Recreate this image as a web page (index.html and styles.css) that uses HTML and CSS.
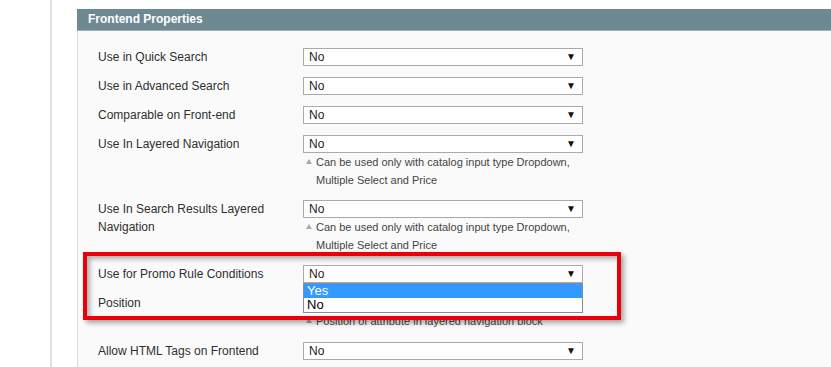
FILE: index.html
```html
<!DOCTYPE html>
<html lang="en">
<head>
  <meta charset="UTF-8" />
  <title>Frontend Properties</title>
  <link rel="stylesheet" href="styles.css">
</head>
<body>
  <div class="page">
    <div class="rail"></div>
    <div class="content">
      <div class="panel">
        <div class="panel-head">Frontend Properties</div>
        <div class="panel-body">

          <div class="row">
            <div class="label">Use in Quick Search</div>
            <div class="value">
              <div class="select">No<span class="arrow">&#9660;</span></div>
            </div>
          </div>

          <div class="row">
            <div class="label">Use in Advanced Search</div>
            <div class="value">
              <div class="select">No<span class="arrow">&#9660;</span></div>
            </div>
          </div>

          <div class="row">
            <div class="label">Comparable on Front-end</div>
            <div class="value">
              <div class="select">No<span class="arrow">&#9660;</span></div>
            </div>
          </div>

          <div class="row">
            <div class="label">Use In Layered Navigation</div>
            <div class="value">
              <div class="select">No<span class="arrow">&#9660;</span></div>
              <p class="note">Can be used only with catalog input type Dropdown, Multiple Select and Price</p>
            </div>
          </div>

          <div class="row">
            <div class="label">Use In Search Results Layered Navigation</div>
            <div class="value">
              <div class="select">No<span class="arrow">&#9660;</span></div>
              <p class="note">Can be used only with catalog input type Dropdown, Multiple Select and Price</p>
            </div>
          </div>

          <div class="row">
            <div class="label">Use for Promo Rule Conditions</div>
            <div class="value">
              <div class="select">No<span class="arrow">&#9660;</span></div>
              <ul class="options">
                <li class="option selected">Yes</li>
                <li class="option">No</li>
              </ul>
            </div>
          </div>

          <div class="row row-last">
            <div class="label">Position</div>
            <div class="value">
              <div class="select"></div>
              <p class="note">Position of attribute in layered navigation block</p>
            </div>
          </div>

          <div class="row">
            <div class="label">Allow HTML Tags on Frontend</div>
            <div class="value">
              <div class="select">No<span class="arrow">&#9660;</span></div>
            </div>
          </div>

          <div class="highlight"></div>
        </div>
      </div>
    </div>
  </div>
</body>
</html>
```

FILE: styles.css
```css
html, body {
  margin: 0;
  padding: 0;
  background: #fff;
  font-family: "Liberation Sans", Arial, sans-serif;
  color: #2f2f2f;
  overflow: hidden;
}

.page {
  display: flex;
  height: 100vh;
}

.rail {
  width: 50px;
  flex: none;
  border-right: 2px solid #e2e2e2;
}

.content {
  flex: 1;
  padding: 9px 0 0 25px;
}

.panel {
  height: 100%;
  display: flex;
  flex-direction: column;
}

.panel-head {
  height: 22px;
  line-height: 21px;
  box-sizing: border-box;
  padding-left: 11px;
  background: #6f8992;
  border-bottom: 1px solid #9fb2ba;
  color: #fff;
  font-weight: bold;
  font-size: 12px;
}

.panel-body {
  position: relative;
  flex: 1;
  background: #fafafa;
  border-left: 1px solid #d9d9d9;
  padding: 17px 0 0 20px;
}

.row {
  display: flex;
  padding-bottom: 11px;
}

.row-last {
  padding-bottom: 12px;
}

.label {
  width: 205px;
  flex: none;
  font-size: 12px;
  line-height: 18px;
  padding-right: 24px;
  box-sizing: border-box;
}

.value {
  position: relative;
  width: 280px;
  flex: none;
}

.select {
  position: relative;
  height: 18px;
  box-sizing: border-box;
  border: 1px solid #aaaaaa;
  background: #fff;
  padding-left: 5px;
  font-size: 12px;
  line-height: 16px;
  color: #222;
}

.arrow {
  position: absolute;
  right: 6px;
  top: 0;
  font-size: 10px;
  line-height: 16px;
  color: #111;
}

.note {
  position: relative;
  margin: 0;
  padding-left: 13px;
  font-size: 11px;
  line-height: 18px;
  color: #444;
}

.note::before {
  content: "";
  position: absolute;
  left: 3px;
  top: 6px;
  border-left: 3px solid transparent;
  border-right: 3px solid transparent;
  border-bottom: 5px solid #a9a9a9;
}

.options {
  position: absolute;
  top: 18px;
  left: 0;
  width: 280px;
  margin: 0;
  padding: 0;
  list-style: none;
  box-sizing: border-box;
  border: 1px solid #7f8fa0;
  background: #fff;
  z-index: 2;
}

.option {
  height: 14px;
  line-height: 14px;
  padding-left: 3px;
  font-size: 13px;
  color: #000;
}

.option.selected {
  background: #3399ff;
  color: #fff;
}

.highlight {
  position: absolute;
  top: 221px;
  left: 5px;
  width: 538px;
  height: 68px;
  box-sizing: border-box;
  border: 4px solid #e8000b;
  box-shadow: 3px 3px 5px rgba(0, 0, 0, 0.35), inset 3px 3px 5px rgba(0, 0, 0, 0.3);
  z-index: 3;
}
```
